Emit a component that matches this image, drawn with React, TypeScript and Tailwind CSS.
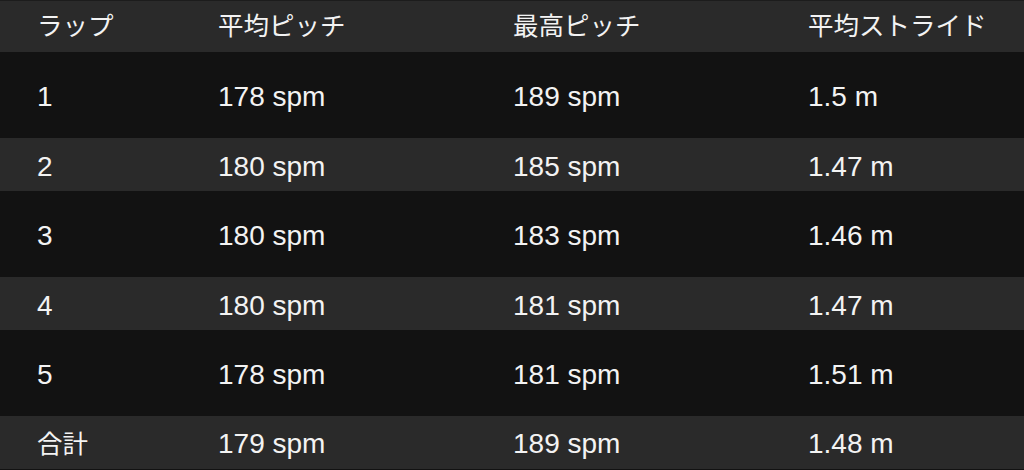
const laps = [
  { lap: "1", avg: "178 spm", max: "189 spm", stride: "1.5 m" },
  { lap: "2", avg: "180 spm", max: "185 spm", stride: "1.47 m" },
  { lap: "3", avg: "180 spm", max: "183 spm", stride: "1.46 m" },
  { lap: "4", avg: "180 spm", max: "181 spm", stride: "1.47 m" },
  { lap: "5", avg: "178 spm", max: "181 spm", stride: "1.51 m" },
];

const cols = "grid grid-cols-[181px_295px_295px_1fr] items-center pl-[37px]";

export default function App() {
  return (
    <main
      className="w-[1024px] h-[470px] bg-[#121212] text-[#f3f3f3] overflow-hidden"
      style={{ fontFamily: '"Liberation Sans", "Noto Sans CJK JP", sans-serif' }}
    >
      {/* header */}
      <div className={`${cols} h-[52px] bg-[#2a2a2a] border-t border-[#1c1c1c] text-[25.5px]`}>
        <div>ラップ</div>
        <div>平均ピッチ</div>
        <div>最高ピッチ</div>
        <div>平均ストライド</div>
      </div>

      {laps.map((r, i) => (
        <div
          key={r.lap}
          className={`${cols} pt-[4px] text-[28px] ${i % 2 === 0 ? "h-[86px] bg-[#121212]" : "h-[53px] bg-[#2a2a2a]"}`}
        >
          <div>{r.lap}</div>
          <div>{r.avg}</div>
          <div>{r.max}</div>
          <div>{r.stride}</div>
        </div>
      ))}

      {/* total */}
      <div className={`${cols} pt-[3px] h-[53px] bg-[#2a2a2a] text-[28px]`}>
        <div className="text-[25.5px]">合計</div>
        <div>179 spm</div>
        <div>189 spm</div>
        <div>1.48 m</div>
      </div>
    </main>
  );
}
